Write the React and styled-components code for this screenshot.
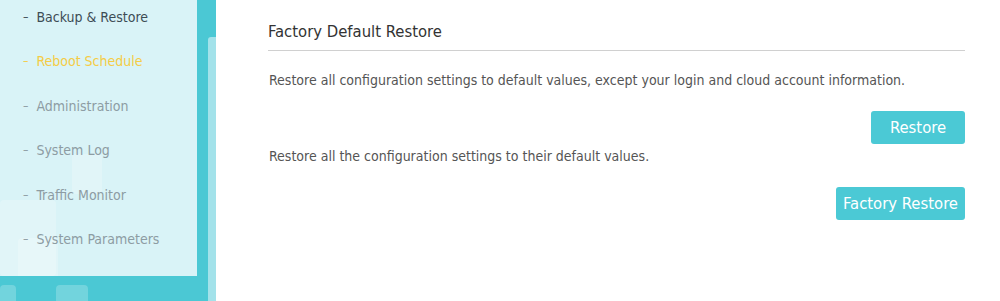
import React from 'react';
import styled, { createGlobalStyle } from 'styled-components';

const GlobalStyle = createGlobalStyle`
  html, body {
    margin: 0;
    padding: 0;
    background: #ffffff;
  }
  body {
    font-family: "DejaVu Sans Condensed", "DejaVu Sans", Tahoma, sans-serif;
  }
`;

const Page = styled.div`
  display: flex;
  width: 1000px;
  height: 301px;
  overflow: hidden;
`;

const Side = styled.aside`
  position: relative;
  width: 216px;
  flex: none;
  background: #4bc8d4;
  display: flex;
  overflow: hidden;
`;

const Panel = styled.nav`
  position: relative;
  width: 197px;
  height: 276px;
  background: #d9f3f7;
  overflow: hidden;
`;

const Square = styled.div`
  position: absolute;
  background: rgba(255, 255, 255, 0.22);
  border-radius: 4px;
`;

const Track = styled.div`
  width: 8px;
  margin: 37px 0 0 11px;
  background: #a3e2ea;
  border-radius: 3px 0 0 0;
`;

const Menu = styled.ul`
  position: relative;
  list-style: none;
  margin: 0;
  padding: 7px 0 0 23px;
  display: flex;
  flex-direction: column;
  gap: 24.4px;
`;

const Item = styled.li`
  height: 20px;
  line-height: 20px;
  display: flex;
  align-items: center;
  gap: 8px;
  font-size: 14px;
  color: ${(p) => (p.active ? '#f5cc45' : p.top ? '#3d4c55' : '#8d9ca3')};
`;

const Dash = styled.span`
  font-size: 12px;
`;

const Content = styled.main`
  flex: 1;
  padding: 22px 35px 0 52px;
`;

const Title = styled.h2`
  margin: 0;
  padding-bottom: 9px;
  line-height: 19px;
  border-bottom: 1px solid #d0d0d0;
  font-size: 16.5px;
  font-weight: normal;
  color: #333333;
`;

const Text = styled.p`
  margin: ${(p) => p.top}px 0 0 1px;
  line-height: 18px;
  font-size: 14px;
  color: #555555;
`;

const Actions = styled.div`
  display: flex;
  justify-content: flex-end;
  margin-top: 22px;
`;

const Button = styled.button`
  height: 33px;
  min-width: ${(p) => p.min || 0}px;
  padding: 0 7px;
  border: none;
  border-radius: 3px;
  background: #4bc9d5;
  color: #ffffff;
  font-family: inherit;
  font-size: 16.5px;
`;

const items = [
  'Backup & Restore',
  'Reboot Schedule',
  'Administration',
  'System Log',
  'Traffic Monitor',
  'System Parameters',
];

const App = () => (
  <Page>
    <GlobalStyle />
    <Side>
      <Panel>
        <Square style={{ left: 72, top: 154, width: 30, height: 40 }} />
        <Square style={{ left: 0, top: 200, width: 56, height: 76 }} />
        <Square style={{ left: 18, top: 238, width: 40, height: 45 }} />
        <Menu>
          {items.map((name, i) => (
            <Item key={name} top={i === 0} active={i === 1}>
              <Dash>–</Dash>
              {name}
            </Item>
          ))}
        </Menu>
      </Panel>
      <Track />
      <Square style={{ left: 0, top: 285, width: 16, height: 20 }} />
      <Square style={{ left: 56, top: 285, width: 32, height: 20 }} />
    </Side>
    <Content>
      <Title>Factory Default Restore</Title>
      <Text top={20}>
        Restore all configuration settings to default values, except your login and cloud account information.
      </Text>
      <Actions>
        <Button min={94}>Restore</Button>
      </Actions>
      <Text top={3}>Restore all the configuration settings to their default values.</Text>
      <Actions>
        <Button>Factory Restore</Button>
      </Actions>
    </Content>
  </Page>
);

export default App;
